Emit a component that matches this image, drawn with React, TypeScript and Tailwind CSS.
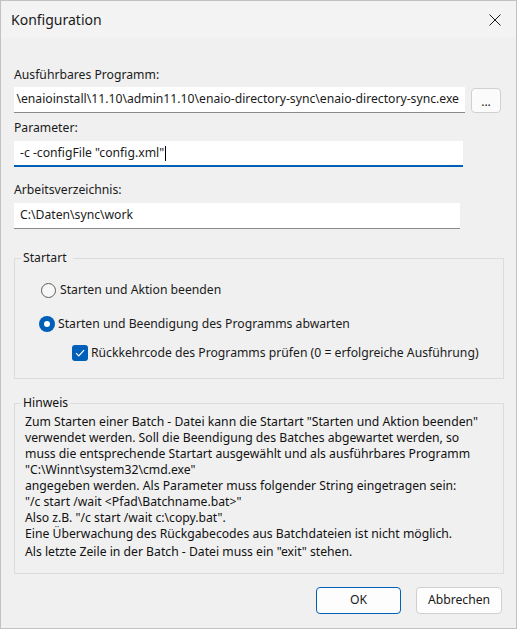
import React from "react";

const font = { fontFamily: '"Noto Sans", "Open Sans", sans-serif' };

function Field({ children, className }: { children: React.ReactNode; className?: string }) {
  return (
    <div className={"h-[26px] bg-white flex items-center overflow-hidden whitespace-nowrap text-[#1a1a1a] " + (className ?? "")}>
      {children}
    </div>
  );
}

export default function App() {
  return (
    <div className="w-[517px] h-[629px] bg-[#f0f0f0] border border-[#c2c2c2] flex flex-col text-[12.2px] text-[#1a1a1a]" style={font}>
      <div className="h-[37px] bg-[#f3f3f3] flex items-center justify-between pl-[10px] pr-[15px]">
        <span className="text-[14px]">Konfiguration</span>
        <svg width="12" height="12" viewBox="0 0 12 12">
          <path d="M0.5 0.5 L11.5 11.5 M11.5 0.5 L0.5 11.5" stroke="#1a1a1a" strokeWidth="1" />
        </svg>
      </div>

      <div className="px-[13px] flex flex-col">
        <div className="mt-[29px] leading-[16px]">Ausführbares Programm:</div>
        <div className="mt-[4px] flex items-center gap-[6px]">
          <Field className="w-[451px] justify-end pr-[6px] border-b border-[#8a8a8a]">
            <span>\enaioinstall\11.10\admin11.10\enaio-directory-sync\enaio-directory-sync.exe</span>
          </Field>
          <button className="w-[30px] h-[25px] bg-[#fbfbfb] border border-[#d0d0d0] rounded-[4px] text-[12px] leading-none pb-[4px] flex items-end justify-center">...</button>
        </div>

        <div className="mt-[7px] leading-[16px]">Parameter:</div>
        <Field className="mt-[5px] w-[449px] pl-[6px] border-b-2 border-[#005fb8]">
          <span>-c -configFile "config.xml"</span>
          <span className="w-px h-[15px] bg-black ml-px" />
        </Field>

        <div className="mt-[15px] leading-[16px]">Arbeitsverzeichnis:</div>
        <Field className="mt-[5px] w-[446px] pl-[6px] border-b border-[#8a8a8a]">
          <span>C:\Daten\sync\work</span>
        </Field>

        <fieldset className="mt-[21px] w-[490px] h-[129px] border border-[#dcdcdc] pl-[24px] pt-[15px]">
          <legend className="ml-[-18px] pl-[2px] pr-[6px] leading-[16px]">Startart</legend>
          <div className="flex items-center gap-[4px] ml-[2px]">
            <span className="w-[15px] h-[15px] rounded-full border border-[#5c5c5c] bg-[#f7f7f7]" />
            <span>Starten und Aktion beenden</span>
          </div>
          <div className="mt-[16px] flex items-center gap-[3px]">
            <span className="w-[16px] h-[16px] rounded-full bg-[#005fb8] flex items-center justify-center">
              <span className="w-[6px] h-[6px] rounded-full bg-white" />
            </span>
            <span>Starten und Beendigung des Programms abwarten</span>
          </div>
          <div className="mt-[10px] ml-[33px] flex items-center gap-[3px]">
            <span className="w-[16px] h-[16px] rounded-[3px] bg-[#005fb8] flex items-center justify-center">
              <svg width="10" height="8" viewBox="0 0 10 8">
                <path d="M1 4.2 L3.8 7 L9 1.2" stroke="white" strokeWidth="1.2" fill="none" />
              </svg>
            </span>
            <span>Rückkehrcode des Programms prüfen (0 = erfolgreiche Ausführung)</span>
          </div>
        </fieldset>

        <fieldset className="mt-[16px] w-[490px] h-[179px] border border-[#dcdcdc] pl-[10px] pt-[3px] text-[#111]">
          <legend className="ml-[-4px] pl-[2px] pr-[2px] leading-[16px]">Hinweis</legend>
          <div className="leading-[16px]">
            Zum Starten einer Batch - Datei kann die Startart "Starten und Aktion beenden"
            <br />
            verwendet werden. Soll die Beendigung des Batches abgewartet werden, so
            <br />
            muss die entsprechende Startart ausgewählt und als ausführbares Programm
            <br />
            "C:\Winnt\system32\cmd.exe"
            <br />
            angegeben werden. Als Parameter muss folgender String eingetragen sein:
            <br />
            "/c start /wait &lt;Pfad\Batchname.bat&gt;"
            <br />
            Also z.B. "/c start /wait c:\copy.bat".
            <br />
            Eine Überwachung des Rückgabecodes aus Batchdateien ist nicht möglich.
          </div>
          <div className="mt-[2px] leading-[16px]">Als letzte Zeile in der Batch - Datei muss ein "exit" stehen.</div>
        </fieldset>

        <div className="mt-[13px] flex justify-end gap-[15px] pr-[1px]">
          <button className="w-[85px] h-[27px] bg-[#fdfdfd] border border-[#005fb8] rounded-[4px]">OK</button>
          <button className="w-[86px] h-[27px] bg-[#fdfdfd] border border-[#d0d0d0] rounded-[4px]">Abbrechen</button>
        </div>
      </div>
    </div>
  );
}
